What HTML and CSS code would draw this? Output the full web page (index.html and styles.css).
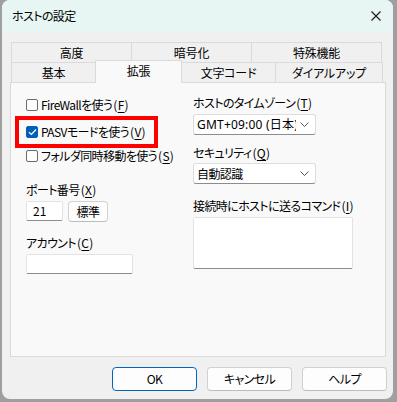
FILE: index.html
```html
<!DOCTYPE html>
<html lang="ja">
<head>
  <meta charset="UTF-8" />
  <title>ホストの設定</title>
  <link rel="stylesheet" href="styles.css">
</head>
<body>
  <div class="window">
    <div class="titlebar">
      <span class="title">ホストの設定</span>
      <svg class="close" width="10" height="10" viewBox="0 0 10 10">
        <path d="M0.5 0.5 L9.5 9.5 M9.5 0.5 L0.5 9.5" stroke="#1a1a1a" stroke-width="1.1" fill="none"/>
      </svg>
    </div>

    <div class="tabs">
      <div class="tab-row">
        <div class="tab" style="width:121px">高度</div>
        <div class="tab" style="width:121px">暗号化</div>
        <div class="tab" style="width:131px">特殊機能</div>
      </div>
      <div class="tab-row">
        <div class="tab" style="width:85px">基本</div>
        <div class="tab active" style="width:87px">拡張</div>
        <div class="tab" style="width:95px">文字コード</div>
        <div class="tab" style="width:108px">ダイアルアップ</div>
      </div>
    </div>

    <div class="panel">
      <div class="col-left">
        <label class="check-row">
          <span class="box"></span>
          <span>FireWallを使う<span class="mn">(<u>F</u>)</span></span>
        </label>
        <label class="check-row row-pasv">
          <span class="box checked">
            <svg width="9" height="8" viewBox="0 0 9 8"><path d="M1 4.2 L3.4 6.5 L8 1.5" stroke="#fff" stroke-width="1.2" fill="none"/></svg>
          </span>
          <span>PASVモードを使う<span class="mn">(<u>V</u>)</span></span>
        </label>
        <label class="check-row row-folder">
          <span class="box"></span>
          <span>フォルダ同時移動を使う<span class="mn">(<u>S</u>)</span></span>
        </label>

        <div class="label label-port">ポート番号<span class="mn">(<u>X</u>)</span></div>
        <div class="port-row">
          <div class="field port">21</div>
          <div class="small-btn">標準</div>
        </div>

        <div class="label label-account">アカウント<span class="mn">(<u>C</u>)</span></div>
        <div class="field account"></div>
      </div>

      <div class="col-right">
        <div class="label">ホストのタイムゾーン<span class="mn">(<u>T</u>)</span></div>
        <div class="combo combo-tz">
          <span class="combo-text latin">GMT+09:00 (日本)</span>
          <svg class="chev" width="9" height="5" viewBox="0 0 9 5"><path d="M0.5 0.5 L4.5 4.5 L8.5 0.5" stroke="#555" stroke-width="1" fill="none"/></svg>
        </div>
        <div class="label label-sec">セキュリティ<span class="mn">(<u>Q</u>)</span></div>
        <div class="combo combo-sec">
          <span class="combo-text">自動認識</span>
          <svg class="chev" width="9" height="5" viewBox="0 0 9 5"><path d="M0.5 0.5 L4.5 4.5 L8.5 0.5" stroke="#555" stroke-width="1" fill="none"/></svg>
        </div>
        <div class="label label-cmd">接続時にホストに送るコマンド<span class="mn">(<u>I</u>)</span></div>
        <div class="field memo"></div>
      </div>

      <div class="highlight"></div>
    </div>

    <div class="buttons">
      <div class="btn default">OK</div>
      <div class="btn">キャンセル</div>
      <div class="btn">ヘルプ</div>
    </div>
  </div>
</body>
</html>
```

FILE: styles.css
```css
* {
  box-sizing: border-box;
}

body {
  margin: 0;
  background: #9f9f9f;
  font-family: "Noto Sans CJK JP", "Noto Sans", sans-serif;
  font-size: 12px;
  font-feature-settings: "palt";
  letter-spacing: -0.6px;
  color: #000;
  height: 402px;
  overflow: hidden;
}

u {
  text-decoration: underline;
  text-underline-offset: 2px;
}

/* mnemonic "(X)" keeps normal spacing */
.mn {
  letter-spacing: 0.3px;
  margin-left: 1px;
}

.window {
  margin-left: 2px;
  width: 391px;
  height: 399px;
  background: #f0f0f0;
  border-radius: 8px;
  overflow: hidden;
}

.titlebar {
  height: 32px;
  background: #e7f6f3;
  display: flex;
  align-items: center;
  justify-content: space-between;
  padding: 0 12px 0 10px;
}

.title {
  line-height: 16px;
}

/* tabs */
.tabs {
  margin: 10px 0 0 9px;
}

.tab-row {
  display: flex;
  height: 20px;
  align-items: flex-start;
}

.tab {
  height: 20px;
  margin-right: -1px;
  border: 1px solid #dadada;
  border-bottom: none;
  background: #f0f0f0;
  text-align: center;
  line-height: 19px;
  letter-spacing: -0.2px;
}

.tab.active {
  height: 23px;
  margin-top: -2px;
  margin-bottom: -1px;
  background: #f9f9f9;
  position: relative;
  z-index: 1;
  line-height: 20px;
}

/* panel */
.panel {
  margin-left: 8px;
  width: 376px;
  height: 275px;
  border: 1px solid #dadada;
  background: #f9f9f9;
  display: flex;
  position: relative;
}

.col-left {
  width: 182px;
  padding: 12px 0 0 15px;
}

.col-right {
  flex: 1;
  padding-top: 12px;
}

.check-row {
  display: flex;
  align-items: center;
  gap: 3px;
  height: 20px;
  line-height: 16px;
}

.row-pasv {
  margin-top: 7px;
}

.row-folder {
  margin-top: 4px;
}

.box {
  width: 12px;
  height: 12px;
  border: 1px solid #6b6b6b;
  border-radius: 2px;
  background: #fdfdfd;
  display: flex;
  align-items: center;
  justify-content: center;
}

.box.checked {
  background: #005fb8;
  border-color: #005fb8;
}

.label {
  height: 16px;
  line-height: 16px;
}

.label-port {
  margin-top: 16px;
}

.label-account {
  margin-top: 13px;
}

.label-sec {
  margin-top: 10px;
}

.label-cmd {
  margin-top: 14px;
}

.field {
  background: #fff;
  border: 1px solid #e3e3e3;
  border-bottom-color: #8c8c8c;
  border-radius: 2px;
}

.port-row {
  display: flex;
  gap: 5px;
  margin-top: 3px;
}

.port {
  width: 37px;
  height: 20px;
  line-height: 18px;
  padding-left: 6px;
  letter-spacing: 0;
}

.small-btn {
  width: 40px;
  height: 21px;
  border: 1px solid #d2d2d2;
  border-bottom-color: #bcbcbc;
  border-radius: 4px;
  background: #fdfdfd;
  text-align: center;
  line-height: 19px;
}

.account {
  width: 107px;
  height: 20px;
  margin-top: 3px;
}

.combo {
  width: 123px;
  height: 21px;
  margin-top: 3px;
  background: #fff;
  border: 1px solid #dcdcdc;
  border-bottom-color: #8c8c8c;
  border-radius: 3px;
  display: flex;
  align-items: center;
  padding: 0 6px 0 3px;
  gap: 4px;
}

.combo-sec {
  margin-top: 2px;
}

.combo-text {
  flex: 1;
  white-space: nowrap;
  overflow: hidden;
  line-height: 16px;
}

.combo-text.latin {
  font-family: "Noto Sans", "Noto Sans CJK JP", sans-serif;
  letter-spacing: 0.2px;
}

.memo {
  width: 160px;
  height: 52px;
  margin-top: 3px;
}

/* red annotation box around the PASV option */
.highlight {
  position: absolute;
  left: 4px;
  top: 33px;
  width: 143px;
  height: 32px;
  border: 4px solid #ff0000;
}

/* bottom buttons */
.buttons {
  display: flex;
  justify-content: flex-end;
  gap: 10px;
  margin-top: 10px;
  padding-right: 6px;
}

.btn {
  width: 85px;
  height: 24px;
  border: 1px solid #d0d0d0;
  border-bottom-color: #bdbdbd;
  border-radius: 4px;
  background: #fdfdfd;
  text-align: center;
  line-height: 22px;
}

.btn.default {
  border: 1px solid #0067c0;
}
```
